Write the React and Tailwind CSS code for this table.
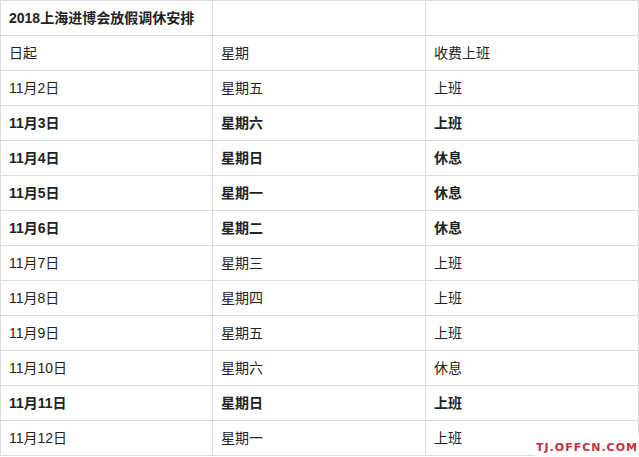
const rows = [
  ["日起", "星期", "收费上班", false],
  ["11月2日", "星期五", "上班", false],
  ["11月3日", "星期六", "上班", true],
  ["11月4日", "星期日", "休息", true],
  ["11月5日", "星期一", "休息", true],
  ["11月6日", "星期二", "休息", true],
  ["11月7日", "星期三", "上班", false],
  ["11月8日", "星期四", "上班", false],
  ["11月9日", "星期五", "上班", false],
  ["11月10日", "星期六", "休息", false],
  ["11月11日", "星期日", "上班", true],
  ["11月12日", "星期一", "上班", false],
];

const cell = "border border-[#dcdcdc] h-[35px] px-2 align-middle";

export default function App() {
  return (
    <div className="relative w-[639px] h-[457px] bg-white overflow-hidden font-['Liberation_Sans','Noto_Sans_CJK_SC',sans-serif] text-[14px] text-[#222]">
      <table className="border-collapse table-fixed w-[638px]">
        <colgroup>
          <col className="w-[212px]" />
          <col className="w-[213px]" />
          <col className="w-[213px]" />
        </colgroup>
        <tbody>
          <tr>
            <td className={`${cell} font-bold`}>2018上海进博会放假调休安排</td>
            <td className={cell}></td>
            <td className={cell}></td>
          </tr>
          {rows.map(([d, w, s, b]) => (
            <tr key={d} className={b ? "font-bold" : ""}>
              <td className={cell}>{d}</td>
              <td className={cell}>{w}</td>
              <td className={cell}>{s}</td>
            </tr>
          ))}
        </tbody>
      </table>
      <div className="absolute right-0 bottom-0 w-[104px] h-[22px] bg-white flex items-center justify-center">
        <span className="font-['DejaVu_Sans',sans-serif] font-bold text-[11px] tracking-[1px] text-[#c3313a] leading-none mt-[2px]">
          TJ.OFFCN.COM
        </span>
      </div>
    </div>
  );
}
